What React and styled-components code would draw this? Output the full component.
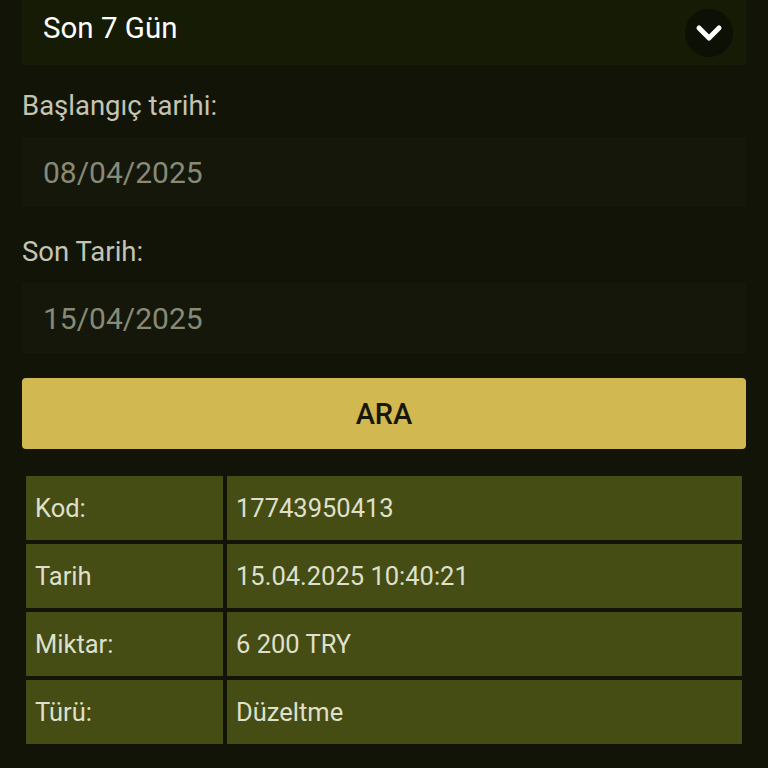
import React from "react";
import styled, { createGlobalStyle } from "styled-components";

const Global = createGlobalStyle`
  html, body {
    margin: 0;
    padding: 0;
    background: #121407;
    font-family: Roboto, "Noto Sans", Arial, sans-serif;
  }
`;

const Page = styled.div`
  padding: 0 22px;
  display: flex;
  flex-direction: column;
`;

const SelectBox = styled.div`
  height: 65px;
  box-sizing: border-box;
  padding: 0 13px 10px 21px;
  background: #161b05;
  display: flex;
  align-items: center;
  justify-content: space-between;
  color: #ffffff;
  font-size: 29.5px;
`;

const ChevronCircle = styled.div`
  width: 48px;
  height: 48px;
  border-radius: 50%;
  background: #0d1004;
  display: flex;
  align-items: center;
  justify-content: center;
  margin-top: 10px;
`;

const Label = styled.div`
  color: #c4c4b4;
  font-size: 27.5px;
  line-height: 32px;
  margin-top: ${(p) => p.$top}px;
`;

const DateField = styled.div`
  height: 70px;
  margin-top: 15px;
  background: #14170a;
  display: flex;
  align-items: center;
  padding-left: 21px;
  color: #878a76;
  font-size: 30px;
`;

const SearchButton = styled.button`
  margin-top: 25px;
  height: 71px;
  border: none;
  border-radius: 4px;
  background: #d1b851;
  color: #17170b;
  font-family: inherit;
  font-size: 29px;
  font-weight: 500;
  cursor: pointer;
`;

const Table = styled.table`
  margin-top: 23px;
  width: 100%;
  border-spacing: 4px 4px;
`;

const Cell = styled.td`
  height: 64px;
  padding: 0 0 0 9px;
  background: #454c14;
  color: #dfe0cc;
  font-size: 25.5px;
  width: ${(p) => (p.$key ? "188px" : "auto")};
`;

const rows = [
  ["Kod:", "17743950413"],
  ["Tarih", "15.04.2025 10:40:21"],
  ["Miktar:", "6 200 TRY"],
  ["Türü:", "Düzeltme"],
];

export default function App() {
  return (
    <>
      <Global />
      <Page>
        <SelectBox>
          <span>Son 7 Gün</span>
          <ChevronCircle>
            <svg width="28" height="20" viewBox="0 0 28 20">
              <path d="M4 5 L14 15 L24 5" fill="none" stroke="#fff" strokeWidth="5" strokeLinecap="round" strokeLinejoin="round" />
            </svg>
          </ChevronCircle>
        </SelectBox>
        <Label $top={25}>Başlangıç tarihi:</Label>
        <DateField>08/04/2025</DateField>
        <Label $top={29}>Son Tarih:</Label>
        <DateField>15/04/2025</DateField>
        <SearchButton>ARA</SearchButton>
        <Table>
          <tbody>
            {rows.map(([k, v]) => (
              <tr key={k}>
                <Cell $key>{k}</Cell>
                <Cell>{v}</Cell>
              </tr>
            ))}
          </tbody>
        </Table>
      </Page>
    </>
  );
}
